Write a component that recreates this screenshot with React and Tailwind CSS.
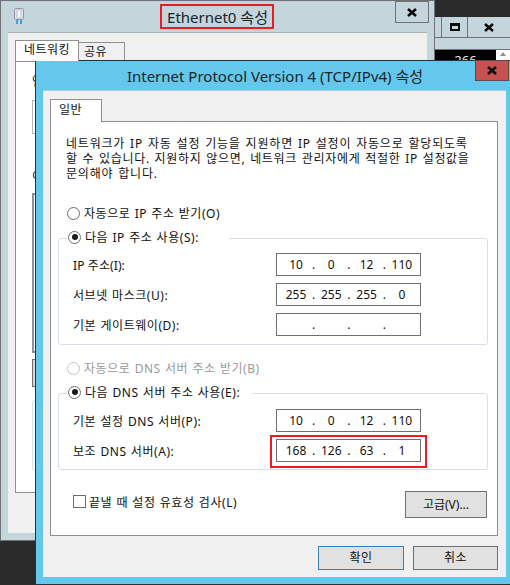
import React from 'react';

const fontStack = 'font-["Noto_Sans","Noto_Sans_CJK_KR",sans-serif]';
const labelSpacing = 'tracking-[0.55px] [word-spacing:0.6px]';

function CloseGlyph() {
  return (
    <svg width="10" height="9" viewBox="0 0 10 9" fill="none">
      <path d="M1 1 L9 8 M9 1 L1 8" stroke="#0c0c0c" strokeWidth="2.6" />
    </svg>
  );
}

function Radio({ checked, disabled }) {
  return (
    <span className={`w-[13px] h-[13px] rounded-full border bg-white flex items-center justify-center shrink-0 ${disabled ? 'border-[#c4c4c4]' : 'border-[#6d6d6d]'}`}>
      {checked && <span className="w-[6px] h-[6px] rounded-full bg-[#1a1a1a]" />}
    </span>
  );
}

function RadioRow({ label, checked, disabled, className = '' }) {
  return (
    <div className={`h-[14px] flex items-center gap-[4px] leading-[14px] ${disabled ? 'text-[#9a9a9a]' : 'text-[#111]'} ${className}`}>
      <Radio checked={checked} disabled={disabled} />
      <span className={`pt-[2px] whitespace-nowrap ${labelSpacing}`}>{label}</span>
    </div>
  );
}

function IpInput({ parts, children }) {
  return (
    <div className="relative w-[145px] h-[23px] border border-[#707070] bg-white flex items-center pl-[3px] text-[#111] leading-none">
      {parts.map((part, i) => (
        <React.Fragment key={i}>
          <span className="w-[32px] text-center">{part}</span>
          {i < 3 && <span className="w-[3.3px] flex justify-center">.</span>}
        </React.Fragment>
      ))}
      {children}
    </div>
  );
}

function IpRow({ label, parts, spacing = labelSpacing, children }) {
  return (
    <div className="flex items-center justify-between pl-[14px] pr-[66px] text-[#111]">
      <span className={`pt-[2px] ${spacing}`}>{label}</span>
      <IpInput parts={parts}>{children}</IpInput>
    </div>
  );
}

function Button({ children, className = '' }) {
  return (
    <button className={`bg-[#e1e1e1] border flex items-center justify-center text-[#111] ${className}`}>
      {children}
    </button>
  );
}

function BackWindow() {
  return (
    <div className="absolute left-0 top-0 w-[435px] h-[541px] border border-[#6f7275] bg-[#c4d5dc] flex flex-col">
      <div className="h-[31px] grid grid-cols-[1fr_auto_1fr] shrink-0">
        <div className="pl-[13px] pt-[7px]">
          <svg width="10" height="16" viewBox="0 0 10 16">
            <rect x="0.5" y="0.5" width="9" height="11" rx="1" fill="#dfe4ea" stroke="#8d95a6" />
            <rect x="3" y="2" width="4" height="8" fill="#f5f7f9" stroke="#a3aab8" strokeWidth="0.7" />
            <rect x="2" y="12" width="2" height="4" fill="#3aa3d8" />
            <rect x="6" y="12" width="2" height="4" fill="#3aa3d8" />
          </svg>
        </div>
        <div className="relative text-[15px] leading-[20px] pt-[6px] text-[#17242b] whitespace-nowrap">
          Ethernet0 속성
          <div className="absolute -left-[7px] -right-[6px] top-[3px] h-[25px] border-[2px] border-[#ed1c24]" />
        </div>
        <div className="flex justify-end pr-[5px]">
          <div className="w-[34px] h-[22px] border border-[#6f7275] flex items-center justify-center">
            <CloseGlyph />
          </div>
        </div>
      </div>
      <div className="ml-[7px] mr-[7px] h-[501px] bg-[#f0f0f0] border-t border-[#a9b4bb] pl-[7px] pt-[8px]">
        <div className="flex items-end h-[20px]">
          <div className="w-[64px] h-[21px] bg-white border border-b-0 border-[#8f8f96] text-center leading-[18px] text-[#111] relative z-10 tracking-[0.5px]">네트워킹</div>
          <div className="w-[46px] h-[19px] border border-b-0 border-l-0 border-[#8f8f96] pl-[5px] leading-[18px] text-[#111] tracking-[0.5px]">공유</div>
        </div>
        <div className="h-[432px] bg-white border border-[#8f8f96] pl-[16px] flex flex-col">
          <div className="mt-[12px] h-[15px] leading-[15px] text-[#111]">연</div>
          <div className="mt-[11px] w-[60px] h-[34px] border border-[#b5b5b5]" />
          <div className="mt-[35px] h-[15px] leading-[15px] text-[#111]">이</div>
          <div className="mt-[9px] w-[60px] h-[160px] border-2 border-[#8f8f96]" />
          <div className="mt-[6px] w-[60px] h-[28px] bg-[#d8d8d8] border border-[#707070]" />
          <div className="mt-[13px] w-[60px] h-[71px] border border-[#d5dfe5] rounded-[3px]" />
        </div>
      </div>
    </div>
  );
}

function BehindWindow() {
  return (
    <div className="absolute left-[435px] top-0 w-[75px] flex flex-col">
      <div className="h-[17px]" />
      <div className="h-[21px] bg-[#c4d5dc] flex border-b border-[#6f7275]">
        <div className="w-[7px] border-r border-[#6f7275]" />
        <div className="w-[26px] border-r border-[#6f7275] flex items-center justify-center">
          <div className="w-[10px] h-[8px] border-2 border-t-[3px] border-[#0c0c0c]" />
        </div>
        <div className="flex-1 flex items-center justify-center">
          <CloseGlyph />
        </div>
      </div>
      <div className="h-[12px] bg-[#c4d5dc] border-b border-[#6f7275]" />
      <div className="flex h-[12px]">
        <div className="w-[61px] bg-black text-[#e8e8e8] text-center leading-[20px] text-[13px] overflow-hidden">266</div>
        <div className="flex-1 bg-white flex justify-center pt-[2px]">
          <div className="w-0 h-0 border-x-[3px] border-x-transparent border-b-[4px] border-b-[#909090]" />
        </div>
      </div>
    </div>
  );
}

function FrontWindow() {
  return (
    <div className="absolute left-[35px] top-[60px] w-[480px] h-[525px] border border-[#26323a] bg-[#63c8eb] flex flex-col">
      <div className="h-[29px] grid grid-cols-[1fr_auto_1fr] shrink-0">
        <div />
        <div className="text-[15px] leading-[20px] pt-[5px] text-[#17242b] whitespace-nowrap">Internet Protocol Version 4 (TCP/IPv4) 속성</div>
        <div className="flex justify-end pr-[5px]">
          <div className="-mt-px w-[34px] h-[21px] bg-[#c75050] border border-[#5e4a4a] flex items-center justify-center">
            <CloseGlyph />
          </div>
        </div>
      </div>
      <div className="ml-[7px] w-[463px] h-[487px] bg-[#f0f0f0] border-t border-[#a9cfe0] pl-[7px] pr-[8px] pt-[8px] flex flex-col">
        <div className="w-[52px] h-[23px] bg-white border border-b-0 border-[#8f8f96] pl-[8px] leading-[20px] text-[#111] -mb-px relative z-10 tracking-[0.5px]">일반</div>
        <div className="h-[415px] bg-white border border-[#8f8f96] pl-[7px] pr-[9px] pt-[13px] flex flex-col">
          <div className="ml-[8px] pt-px leading-[15px] text-[#111] whitespace-nowrap [word-spacing:1px]">
            <p className="tracking-[0.8px]">네트워크가 IP 자동 설정 기능을 지원하면 IP 설정이 자동으로 할당되도록</p>
            <p className="tracking-[0.68px]">할 수 있습니다. 지원하지 않으면, 네트워크 관리자에게 적절한 IP 설정값을</p>
            <p className="tracking-[0.8px]">문의해야 합니다.</p>
          </div>
          <RadioRow className="mt-[25px] ml-[9px]" label="자동으로 IP 주소 받기(O)" />
          <div className="mt-[18px] border border-[#d5dfe5] rounded-[3px] pb-[8px] flex flex-col">
            <RadioRow className="-mt-[9px] ml-[8px] pl-[1px] w-[162px] bg-white" checked label="다음 IP 주소 사용(S):" />
            <div className="mt-[9px] flex flex-col gap-[7px]">
              <IpRow label="IP 주소(I):" spacing="tracking-[0.1px]" parts={['10', '0', '12', '110']} />
              <IpRow label="서브넷 마스크(U):" parts={['255', '255', '255', '0']} />
              <IpRow label="기본 게이트웨이(D):" parts={['', '', '', '']} />
            </div>
          </div>
          <RadioRow className="mt-[16px] ml-[9px]" disabled label="자동으로 DNS 서버 주소 받기(B)" />
          <div className="mt-[18px] border border-[#d5dfe5] rounded-[3px] pb-[7px] flex flex-col">
            <RadioRow className="-mt-[9px] ml-[8px] pl-[1px] w-[185px] bg-white" checked label="다음 DNS 서버 주소 사용(E):" />
            <div className="mt-[10px] flex flex-col gap-[7px]">
              <IpRow label="기본 설정 DNS 서버(P):" parts={['10', '0', '12', '110']} />
              <IpRow label="보조 DNS 서버(A):" parts={['168', '126', '63', '1']}>
                <div className="absolute -left-[7px] -right-[7px] -top-[5px] -bottom-[7px] border-[2px] border-[#ed1c24]" />
              </IpRow>
            </div>
          </div>
          <div className="mt-[21px] flex justify-between pl-[15px] pr-[1px]">
            <div className="flex items-center gap-[3px] h-[13px] mt-[4px] text-[#111]">
              <span className="w-[13px] h-[13px] border border-[#6d6d6d] bg-white shrink-0" />
              <span className={`pt-[2px] ${labelSpacing}`}>끝낼 때 설정 유효성 검사(L)</span>
            </div>
            <Button className="w-[82px] h-[27px] border-[#707070]">고급(V)...</Button>
          </div>
        </div>
        <div className="mt-[10px] flex justify-end gap-[9px]">
          <Button className="w-[86px] h-[24px] border-[#3d7fb5] tracking-[0.5px]">확인</Button>
          <Button className="w-[85px] h-[24px] border-[#707070] tracking-[0.5px]">취소</Button>
        </div>
      </div>
    </div>
  );
}

export default function App() {
  return (
    <div className={`relative w-[510px] h-[585px] overflow-hidden bg-[#2b2b2b] text-[12px] ${fontStack}`}>
      <BehindWindow />
      <BackWindow />
      <FrontWindow />
    </div>
  );
}
